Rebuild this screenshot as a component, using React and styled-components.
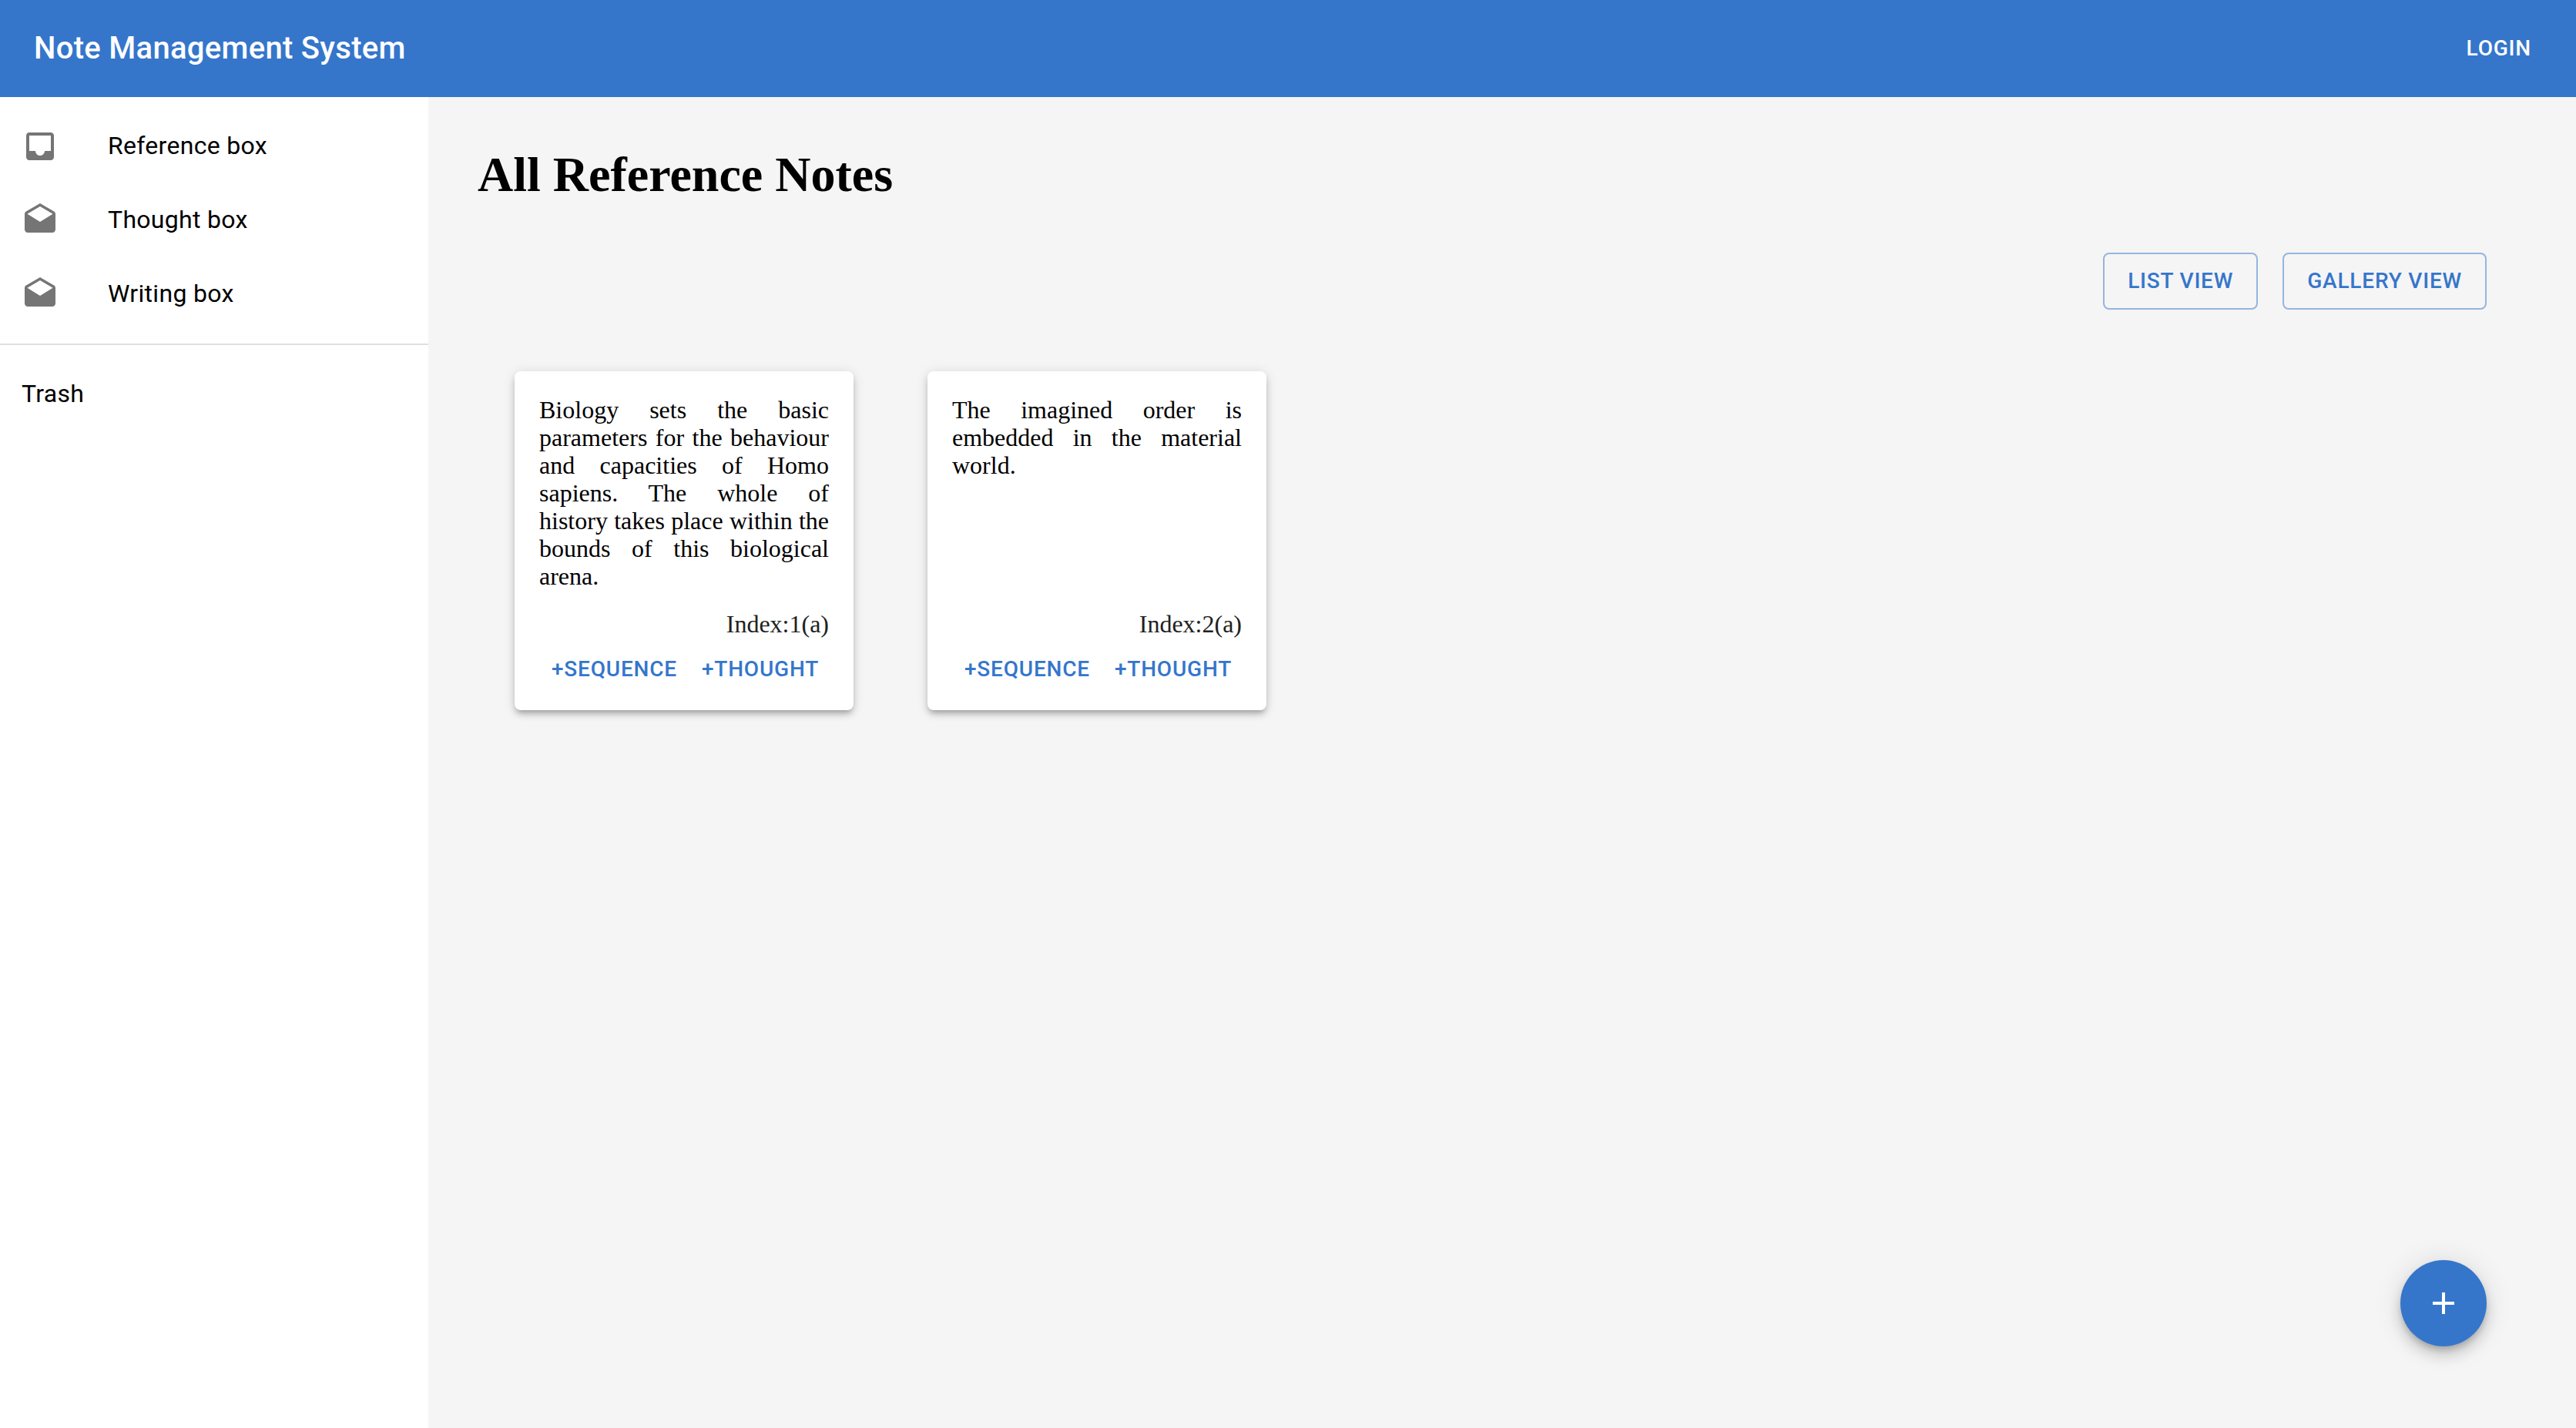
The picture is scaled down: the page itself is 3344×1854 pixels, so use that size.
import React from 'react';
import styled, { createGlobalStyle, ThemeProvider } from 'styled-components';

const theme = {
  primary: '#3576cb',
  primaryBorder: 'rgba(53, 118, 203, 0.5)',
  canvas: '#f5f5f5',
  icon: '#757575',
  divider: '#e0e0e0',
  sans: "Roboto, 'Liberation Sans', sans-serif",
  serif: "'Liberation Serif', 'Times New Roman', serif",
};

const GlobalStyle = createGlobalStyle`
  *, *::before, *::after { box-sizing: border-box; }
  body {
    margin: 0;
    background: ${theme.canvas};
    color: #000;
    font-family: ${theme.serif};
    font-size: 32px;
    line-height: 36px;
  }
`;

const Page = styled.div`
  display: flex;
  flex-direction: column;
  min-height: 100vh;
`;

const TopBar = styled.header`
  display: flex;
  align-items: center;
  justify-content: space-between;
  height: 126px;
  padding: 0 42px 0 44px;
  background: ${(p) => p.theme.primary};
  color: #fff;
`;

const Brand = styled.div`
  font: 500 40px/64px ${(p) => p.theme.sans};
  letter-spacing: 0.0075em;
`;

const Button = styled.button`
  height: 74px;
  padding: 0 ${(p) => (p.$outlined ? '30px' : '16px')};
  border: ${(p) => (p.$outlined ? `2px solid ${p.theme.primaryBorder}` : '0')};
  border-radius: 8px;
  background: transparent;
  color: ${(p) => (p.$inverted ? '#fff' : p.theme.primary)};
  font: 500 28px/48px ${(p) => p.theme.sans};
  letter-spacing: 0.02857em;
  text-transform: uppercase;
  white-space: nowrap;
  cursor: pointer;
`;

const Body = styled.div`
  display: flex;
  flex: 1;
`;

const Sidebar = styled.nav`
  flex: 0 0 556px;
  background: #fff;
`;

const NavList = styled.ul`
  margin: 0;
  padding: 16px 0;
  list-style: none;

  & + & {
    border-top: 2px solid ${(p) => p.theme.divider};
  }
`;

const NavLink = styled.a`
  display: flex;
  align-items: center;
  gap: 64px;
  height: 96px;
  padding: 0 28px;
  color: #000;
  font: 400 32px/48px ${(p) => p.theme.sans};
  letter-spacing: 0.00938em;
  text-decoration: none;
`;

const NavLabel = styled.span`
  padding-bottom: 2px;
`;

const Icon = styled.svg`
  display: block;
  width: 48px;
  height: 48px;
  fill: ${(p) => p.$color || p.theme.icon};
`;

const Main = styled.main`
  flex: 1;
  padding: 64px 116px 64px 64px;
`;

const Heading = styled.h1`
  margin: 0 0 64px;
  font-size: 64px;
  line-height: 74px;
`;

const ViewSwitch = styled.div`
  display: flex;
  justify-content: flex-end;
  gap: 32px;
  margin-bottom: 80px;
`;

const Notes = styled.div`
  display: flex;
  flex-wrap: wrap;
  gap: 96px;
  padding-left: 48px;
`;

const Card = styled.article`
  display: flex;
  flex-direction: column;
  width: 440px;
  min-height: 440px;
  padding: 32px 32px 16px;
  border-radius: 8px;
  background: #fff;
  box-shadow:
    0 6px 6px -4px rgba(0, 0, 0, 0.2),
    0 6px 8px rgba(0, 0, 0, 0.14),
    0 2px 16px rgba(0, 0, 0, 0.12);
`;

const NoteText = styled.p`
  flex: 1;
  margin: 0;
  text-align: justify;
`;

const NoteIndex = styled.div`
  margin-bottom: 4px;
  color: #212121;
  text-align: right;
`;

const Actions = styled.div`
  display: flex;
`;

const AddButton = styled.button`
  position: fixed;
  right: 116px;
  bottom: 106px;
  display: grid;
  place-items: center;
  width: 112px;
  height: 112px;
  padding: 0;
  border: 0;
  border-radius: 50%;
  background: ${(p) => p.theme.primary};
  box-shadow:
    0 6px 10px -2px rgba(0, 0, 0, 0.2),
    0 12px 20px rgba(0, 0, 0, 0.14),
    0 2px 36px rgba(0, 0, 0, 0.12);
  cursor: pointer;
`;

const INBOX =
  'M19 3H4.99c-1.11 0-1.98.89-1.98 2L3 19c0 1.1.88 2 1.99 2H19c1.1 0 2-.9 2-2V5c0-1.11-.9-2-2-2zm0 12h-4c0 1.66-1.35 3-3 3s-3-1.34-3-3H4.99V5H19v10z';
const DRAFTS =
  'M21.99 8c0-.72-.37-1.35-.94-1.7L12 1 2.95 6.3C2.38 6.65 2 7.28 2 8v10c0 1.1.9 2 2 2h16c1.1 0 2-.9 2-2l-.01-10zM12 13L3.74 7.84 12 3l8.26 4.84L12 13z';
const PLUS = 'M19 13h-6v6h-2v-6H5v-2h6V5h2v6h6v2z';

const Glyph = ({ path, color }) => (
  <Icon viewBox="0 0 24 24" aria-hidden="true" $color={color}>
    <path d={path} />
  </Icon>
);

const boxes = [
  { label: 'Reference box', path: INBOX },
  { label: 'Thought box', path: DRAFTS },
  { label: 'Writing box', path: DRAFTS },
];

const notes = [
  {
    index: '1(a)',
    text: 'Biology sets the basic parameters for the behaviour and capacities of Homo sapiens. The whole of history takes place within the bounds of this biological arena.',
  },
  {
    index: '2(a)',
    text: 'The imagined order is embedded in the material world.',
  },
];

const Note = ({ text, index }) => (
  <Card>
    <NoteText>{text}</NoteText>
    <NoteIndex>{`Index:${index}`}</NoteIndex>
    <Actions>
      <Button type="button">+Sequence</Button>
      <Button type="button">+Thought</Button>
    </Actions>
  </Card>
);

export default function App() {
  return (
    <ThemeProvider theme={theme}>
      <GlobalStyle />
      <Page>
        <TopBar>
          <Brand>Note Management System</Brand>
          <Button type="button" $inverted>Login</Button>
        </TopBar>
        <Body>
          <Sidebar>
            <NavList>
              {boxes.map((box) => (
                <li key={box.label}>
                  <NavLink href="#">
                    <Glyph path={box.path} />
                    <NavLabel>{box.label}</NavLabel>
                  </NavLink>
                </li>
              ))}
            </NavList>
            <NavList>
              <li>
                <NavLink href="#">
                  <NavLabel>Trash</NavLabel>
                </NavLink>
              </li>
            </NavList>
          </Sidebar>
          <Main>
            <Heading>All Reference Notes</Heading>
            <ViewSwitch>
              <Button type="button" $outlined>List view</Button>
              <Button type="button" $outlined>Gallery view</Button>
            </ViewSwitch>
            <Notes>
              {notes.map((note) => (
                <Note key={note.index} {...note} />
              ))}
            </Notes>
          </Main>
        </Body>
      </Page>
      <AddButton type="button" aria-label="Add note">
        <Glyph path={PLUS} color="#fff" />
      </AddButton>
    </ThemeProvider>
  );
}
